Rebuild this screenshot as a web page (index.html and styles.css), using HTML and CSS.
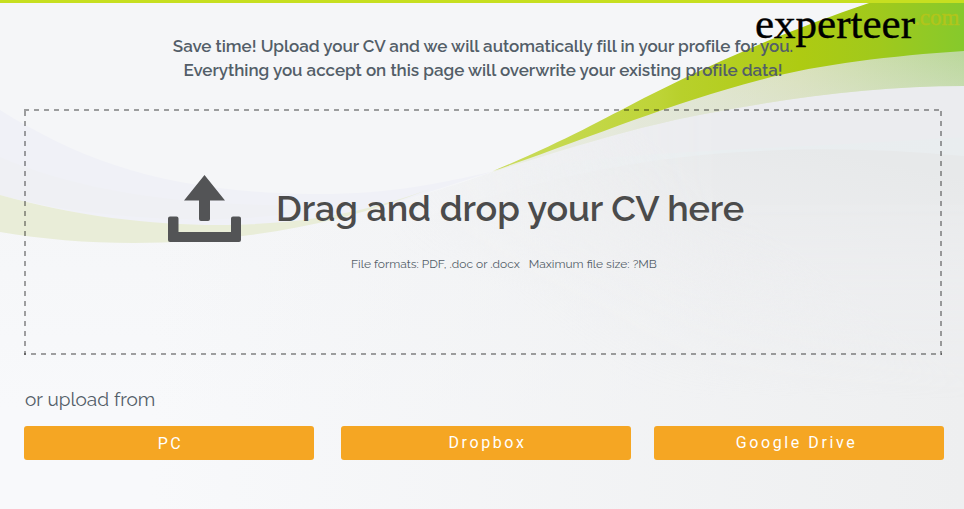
FILE: index.html
```
<!DOCTYPE html>
<html lang="en">
<head>
<meta charset="utf-8">
<title>Upload your CV</title>
<link rel="stylesheet" href="styles.css">
</head>
<body>
<svg class="waves" viewBox="0 0 964 509" preserveAspectRatio="none" aria-hidden="true">
  <defs>
    <linearGradient id="green"><stop offset="0" stop-color="#cbdc5e"/><stop offset=".35" stop-color="#bed437"/><stop offset=".4" stop-color="#b8d02b"/><stop offset=".65" stop-color="#aecb12"/><stop offset=".82" stop-color="#a0c91c"/><stop offset="1" stop-color="#86c92c"/></linearGradient>
    <linearGradient id="pale"><stop offset="0" stop-color="#f6f8ea"/><stop offset=".4" stop-color="#e2e7cf"/><stop offset=".65" stop-color="#d9e1b9"/><stop offset="1" stop-color="#bcd89d"/></linearGradient>
    <linearGradient id="fade" gradientUnits="userSpaceOnUse" x1="0" y1="55" x2="0" y2="112"><stop offset="0" stop-color="#e1e5dd" stop-opacity="0"/><stop offset="1" stop-color="#e1e5dd" stop-opacity=".5"/></linearGradient>
    <linearGradient id="base" gradientUnits="userSpaceOnUse" x1="150" y1="0" x2="964" y2="0"><stop offset="0" stop-color="#eeeff0" stop-opacity="0"/><stop offset="1" stop-color="#eeeff0"/></linearGradient>
    <linearGradient id="grey" gradientUnits="userSpaceOnUse" x1="470" y1="270" x2="600" y2="100"><stop offset="0" stop-color="#ebecef" stop-opacity="0"/><stop offset="1" stop-color="#ebecef"/></linearGradient>
    <linearGradient id="slate" gradientUnits="userSpaceOnUse" x1="800" y1="145" x2="760" y2="340"><stop offset="0" stop-color="#e7e9ea"/><stop offset="1" stop-color="#efeff0" stop-opacity="0"/></linearGradient>
    <linearGradient id="edge" gradientUnits="userSpaceOnUse" x1="380" y1="0" x2="720" y2="0"><stop offset="0" stop-color="#fff" stop-opacity="0"/><stop offset="1" stop-color="#fff"/></linearGradient>
    <linearGradient id="low" gradientUnits="userSpaceOnUse" x1="0" y1="200" x2="0" y2="400"><stop offset="0" stop-color="#000" stop-opacity="0"/><stop offset="1" stop-color="#000"/></linearGradient>
    <linearGradient id="teal" gradientUnits="userSpaceOnUse" x1="480" y1="0" x2="964" y2="0"><stop offset="0" stop-color="#e9eff0" stop-opacity="0"/><stop offset=".5" stop-color="#e9eef0"/><stop offset="1" stop-color="#e9edef"/></linearGradient>
    <mask id="right" maskUnits="userSpaceOnUse" x="0" y="0" width="964" height="509"><path fill="url(#edge)" d="M0 0H964V509H0Z"/><path fill="url(#low)" d="M0 0H964V509H0Z"/></mask>
  </defs>
  <path fill="url(#base)" d="M0 250C240 250 400 205 495 171C660 110 790 84 964 84V509H0Z"/>
  <path fill="#f0f1f7" d="M0 110C85 163 170 192 310 194C385 195 438 184 495 171C430 190 370 218 260 226C160 230 80 216 0 195Z"/>
  <path fill="#eff0f4" d="M0 157C80 192 190 208 330 205C270 224 120 227 0 195Z"/>
  <path fill="#e9edd8" d="M0 195C95 222 195 229 270 223C330 219 380 207 430 189C370 213 310 227 250 235C165 247 75 245 0 232Z"/>
  <g mask="url(#right)">
    <path fill="url(#grey)" d="M370 213C430 192 480 178 540 156C660 110 790 84 964 84V509H370Z"/>
    <path fill="url(#teal)" d="M480 180C590 150 700 154 964 137V160C820 143 670 150 480 210Z"/>
    <path fill="url(#slate)" d="M370 235C500 190 610 160 740 152C815 147 890 149 964 156V509H370Z"/>
  </g>
  <path fill="url(#pale)" d="M490 173C580 144 648 124 710 113C800 96 880 86 964 86V30C820 40 660 98 490 173Z"/>
  <path fill="url(#fade)" d="M490 173C580 144 648 124 710 113C800 96 880 86 964 86V30C820 40 660 98 490 173Z"/>
  <path fill="url(#green)" d="M493 171C560 143 600 121 644 98C730 55 795 28 872 2H964V51C890 56 820 64 760 80C665 105 590 138 493 171Z"/>
</svg>
<main class="page">
  <svg class="logo" viewBox="0 0 210 50" role="img" aria-label="experteer.com">
    <text class="logo-name" x="1" y="35" textLength="160" lengthAdjust="spacingAndGlyphs">experteer</text>
    <text class="logo-domain" x="160" y="22">.com</text>
  </svg>
  <header class="intro">
    <p>Save time! Upload your CV and we will automatically fill in your profile for you.</p>
    <p>Everything you accept on this page will overwrite your existing profile data!</p>
  </header>
  <section class="dropzone">
    <svg class="outline" viewBox="0 0 918 246" aria-hidden="true">
      <path stroke-dasharray="5 5" d="M0 1H918"/><path stroke-dasharray="5 5" stroke-dashoffset="3" d="M0 245H918"/>
      <path stroke-dasharray="5 5" stroke-dashoffset="8" d="M1 0V246"/><path stroke-dasharray="5 5" stroke-dashoffset="8" d="M917 0V246"/>
    </svg>
    <svg class="upload" viewBox="0 0 74 68" aria-hidden="true"><path d="M36.5 0 57 25.5H42V44Q42 46 40 46H33Q31 46 31 44V25.5H16ZM2 41.500H8.500Q10.500 41.500 10.500 43.500V57H63V43.500Q63 41.500 65 41.500H71Q73 41.500 73 43.500V65Q73 67 71 67H2Q0 67 0 65V43.500Q0 41.500 2 41.500Z"/></svg>
    <div class="prompt">
      <h1>Drag and drop your CV here</h1>
      <p class="limits"><span>File formats: PDF, .doc or .docx</span><span>Maximum file size: ?MB</span></p>
    </div>
  </section>
  <h2>or upload from</h2>
  <nav class="sources">
    <button class="source pc">PC</button>
    <button class="source">Dropbox</button>
    <button class="source drive">Google Drive</button>
  </nav>
</main>
</body>
</html>
```
FILE: styles.css
```
* { box-sizing: border-box; }
body { margin: 0; height: 509px; overflow: hidden; position: relative; font-family: Raleway, Lato, sans-serif; color: #535e68; background: linear-gradient(#f5f6f8 0, #f5f6f8 40%, #f8f9fb 80%); border-top: 3px solid #c7df20; }
.waves { position: absolute; left: 0; top: -3px; width: 964px; height: 509px; z-index: -1; clip-path: inset(3px 0 0 0); }
.page { padding: 31px 20px 0 24px; }
.logo { position: absolute; left: 754px; top: 0; width: 210px; height: 50px; overflow: visible; }
.logo-name { font: 43px "Liberation Serif", serif; fill: #000; stroke: #000; stroke-width: .4; }
.logo-domain { font: 23px "Liberation Serif", serif; fill: #b2c51b; stroke: #b2c51b; stroke-width: .4; }
.intro { width: 918px; text-align: center; font-size: 17px; line-height: 24px; font-weight: 600; letter-spacing: -.03px; }
.intro p { margin: 0; white-space: nowrap; }
.dropzone { position: relative; width: 918px; height: 246px; margin-top: 27px; display: flex; padding: 66px 0 0 144px; }
.outline { position: absolute; inset: 0; width: 918px; height: 246px; fill: none; stroke: #000; stroke-opacity: .36; stroke-width: 2; }
.upload { width: 74px; height: 68px; fill: #535456; flex: none; }
.prompt { margin-left: 34px; padding-top: 9px; }
h1 { margin: 0; font-size: 36px; line-height: 48px; font-weight: 600; letter-spacing: -.1px; color: #4b4b4b; white-space: nowrap; }
.limits { margin: 23px 0 0 75px; display: flex; gap: 9px; font-size: 12px; line-height: 18px; white-space: nowrap; }
h2 { margin: 30px 0 0 1px; font-size: 19px; line-height: 28px; font-weight: 400; }
.sources { display: grid; grid-template-columns: 290px 290px 290px; column-gap: 27px; margin-top: 13px; }
.source { height: 34px; padding: 0 0 2px 3px; border: 0; border-radius: 3px; background: #f5a623; color: #fff; font: 400 16px Roboto, sans-serif; letter-spacing: 2.6px; }
.pc { padding-bottom: 0; }
.drive { margin-left: -4px; margin-right: 4px; padding-right: 8px; }
```
